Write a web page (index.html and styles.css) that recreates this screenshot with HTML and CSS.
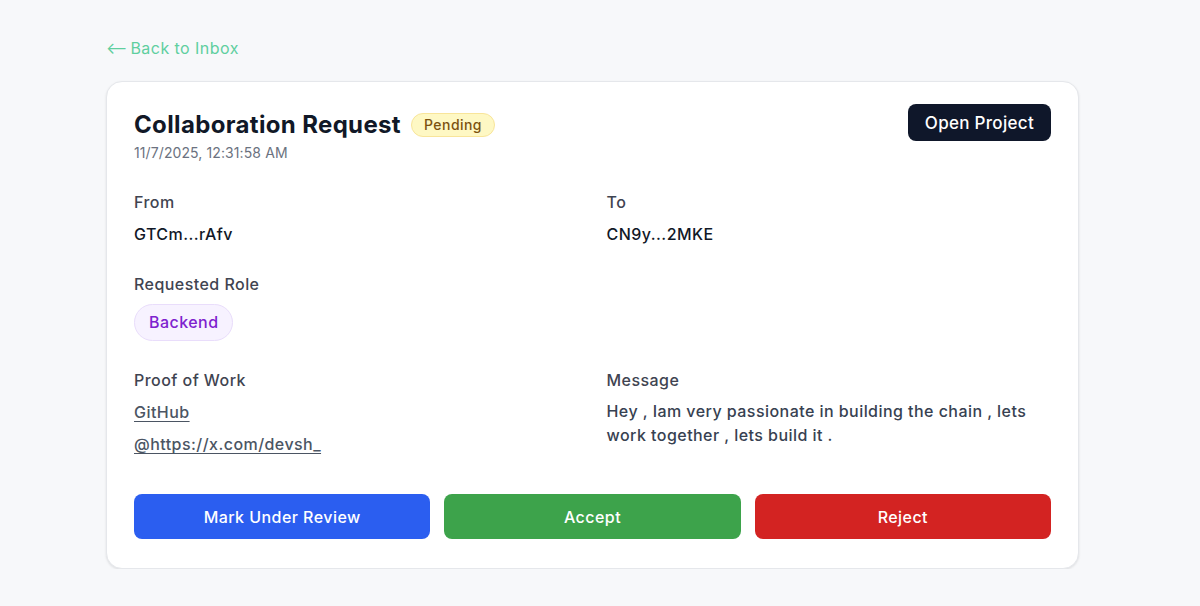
FILE: index.html
```html
<!DOCTYPE html>
<html lang="en">
<head>
<meta charset="utf-8">
<title>Collaboration Request</title>
<link rel="stylesheet" href="styles.css">
</head>
<body>
<main class="page">
  <a class="back-link" href="#"><span class="arrow">⟵</span>Back to Inbox</a>
  <section class="card">
    <header class="card-header">
      <div class="heading">
        <div class="title-row">
          <h1 class="title">Collaboration Request</h1>
          <span class="badge-pending">Pending</span>
        </div>
        <div class="date">11/7/2025, 12:31:58 AM</div>
      </div>
      <button class="btn-open">Open Project</button>
    </header>

    <div class="details">
      <div class="field">
        <div class="label">From</div>
        <div class="value">GTCm...rAfv</div>
      </div>
      <div class="field">
        <div class="label">To</div>
        <div class="value">CN9y...2MKE</div>
      </div>
      <div class="field">
        <div class="label">Requested Role</div>
        <div class="pill-wrap"><span class="role-pill">Backend</span></div>
      </div>
      <div class="field"></div>
      <div class="field">
        <div class="label">Proof of Work</div>
        <div class="links">
          <a class="link" href="#">GitHub</a>
          <a class="link" href="#">@https://x.com/devsh_</a>
        </div>
      </div>
      <div class="field">
        <div class="label">Message</div>
        <p class="message">Hey , Iam very passionate in building the chain , lets work together , lets build it .</p>
      </div>
    </div>

    <div class="actions">
      <button class="btn btn-review">Mark Under Review</button>
      <button class="btn btn-accept">Accept</button>
      <button class="btn btn-reject">Reject</button>
    </div>
  </section>
</main>
</body>
</html>
```

FILE: styles.css
```css
* { box-sizing: border-box; }

html, body {
  margin: 0;
  padding: 0;
  background: #f7f8fa;
  font-family: Inter, "Noto Sans", "Liberation Sans", sans-serif;
  color: #111827;
  letter-spacing: 0.45px;
}

.page {
  padding: 36px 0 0 106px;
}

.back-link {
  display: inline-flex;
  align-items: center;
  color: #5fcf9f;
  text-decoration: none;
  font-size: 16px;
  line-height: 24px;
  margin-bottom: 21px;
}

.back-link .arrow {
  font-size: 16px;
  letter-spacing: 0;
  margin-right: 3px;
}

.card {
  width: 973px;
  background: #ffffff;
  border: 1px solid #e5e7eb;
  border-radius: 16px;
  box-shadow: 0 1px 3px rgba(0, 0, 0, 0.07), 0 1px 2px rgba(0, 0, 0, 0.04);
  padding: 27px 27px 29px 27px;
}

.card-header {
  display: flex;
  justify-content: space-between;
  align-items: flex-start;
}

.title-row {
  display: flex;
  align-items: center;
  gap: 10px;
}

.title {
  margin: 0;
  font-size: 24px;
  line-height: 32px;
  font-weight: 700;
  color: #111827;
  letter-spacing: 0.35px;
}

.badge-pending {
  display: inline-block;
  background: #fef8c4;
  border: 1px solid #f8e59a;
  color: #7c520f;
  font-size: 14px;
  line-height: 20px;
  font-weight: 500;
  padding: 1px 12px;
  border-radius: 999px;
  margin-top: 0;
}

.date {
  margin-top: 2px;
  font-size: 14px;
  line-height: 20px;
  color: #6b7280;
  letter-spacing: 0.1px;
}

.btn-open {
  margin-top: -5px;
  background: #0f172a;
  color: #ffffff;
  border: none;
  border-radius: 8px;
  height: 37px;
  padding: 0 17px;
  font-family: inherit;
  font-size: 17px;
  font-weight: 500;
  letter-spacing: 0.3px;
  cursor: pointer;
}

.details {
  margin-top: 27px;
  display: grid;
  grid-template-columns: 1fr 1fr;
  column-gap: 28px;
  row-gap: 26px;
}

.field .label {
  font-size: 16px;
  line-height: 24px;
  font-weight: 500;
  color: #3f4451;
  margin-bottom: 8px;
}

.pill-wrap {
  display: flex;
  margin-top: 4px;
  margin-bottom: 1px;
}

.value {
  font-size: 16px;
  line-height: 24px;
  font-weight: 500;
  color: #111827;
}

.role-pill {
  display: inline-block;
  background: #f7f2ff;
  border: 1px solid #e9ddfb;
  color: #7e22ce;
  font-size: 16px;
  line-height: 23px;
  font-weight: 500;
  padding: 6px 14px;
  border-radius: 999px;
}

.links {
  display: flex;
  flex-direction: column;
  align-items: flex-start;
  gap: 8px;
}

.link {
  color: #4b5563;
  font-size: 16px;
  line-height: 24px;
  font-weight: 500;
  text-decoration: underline;
  text-underline-offset: 3px;
}

.message {
  margin: 0;
  font-size: 16px;
  line-height: 23.5px;
  font-weight: 500;
  color: #374151;
}

.actions {
  margin-top: 38px;
  display: grid;
  grid-template-columns: 1fr 1fr 1fr;
  gap: 14px;
}

.btn {
  height: 45px;
  border: none;
  border-radius: 8px;
  color: #ffffff;
  font-family: inherit;
  font-size: 16px;
  font-weight: 500;
  letter-spacing: 0.45px;
  cursor: pointer;
}

.btn-review { background: #2b5ef0; }
.btn-accept { background: #3da34b; }
.btn-reject { background: #d32322; }
```
